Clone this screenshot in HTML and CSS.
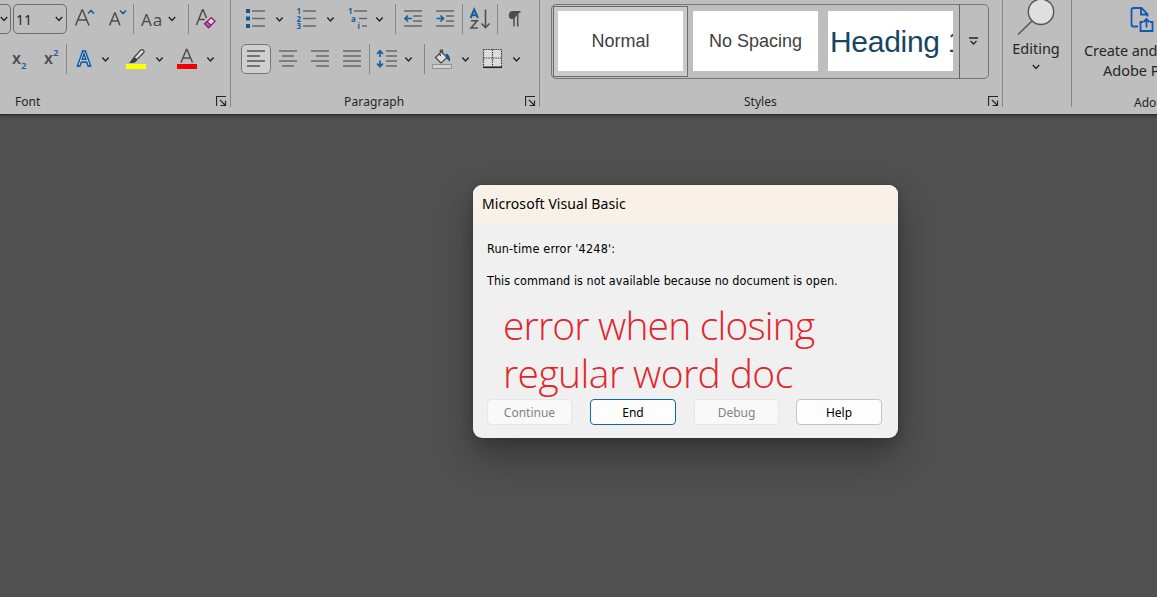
FILE: index.html
```
<!DOCTYPE html>
<html lang="en">
<head>
<meta charset="utf-8">
<title>Microsoft Visual Basic</title>
<link rel="stylesheet" href="styles.css">
</head>
<body>
<svg class="defs" width="0" height="0">
  <symbol id="chev" viewBox="0 0 8 6"><path d="M.8 1l3.2 3.4L7.200 1" fill="none" stroke="#262626" stroke-width="1.500"/></symbol>
  <symbol id="launch" viewBox="0 0 11 11"><path d="M.5 10V.5H10M4 4l5 5M9.500 4.500v5h-5" fill="none" stroke="#262626" stroke-width="1.200"/></symbol>
</svg>
<div class="ribbon">
  <section class="group font">
    <div class="row">
      <div class="combo stub"><svg width="8" height="6"><use href="#chev"/></svg></div>
      <div class="combo size"><span>11</span><svg width="8" height="6"><use href="#chev"/></svg></div>
      <svg width="35" height="30" viewBox="67 4 35 30"><path d="M75.500 25.500L82 10h.6L89 25.500M78 20h8.800" class="ln"/><path d="M88 13.500l3-3 3 3" class="bl"/></svg>
      <svg width="31" height="30" viewBox="102 4 31 30"><path d="M109.500 25.500l5.200-12.500h.5L120 25.500M111.500 21h6.800" class="ln"/><path d="M120 10.500l3 3 3-3" class="bl"/></svg>
      <i class="sep"></i>
      <span class="aa">Aa</span>
      <svg class="cv" width="8" height="6"><use href="#chev"/></svg>
      <i class="sep sep-b"></i>
      <svg width="34" height="30" viewBox="189 4 34 30"><path d="M196.500 25L202.500 9.800h.6L206.500 18M198.800 19.500h6" class="ln"/><path d="M204.800 23.800l6.500-6.200 3.800 3.700-6.500 6.300z" fill="#e6d3e3" stroke="#8a1d6c" stroke-width="1.300"/><path d="M204.800 23.800l2.400-2.300 3.800 3.700-2.400 2.400z" fill="#c85aa8" stroke="#8a1d6c" stroke-width="1.200"/></svg>
    </div>
    <div class="row">
      <svg width="66" height="30" viewBox="0 44 66 30"><text x="12" y="64" class="xx">x</text><text x="21" y="68.500" class="sub">2</text><text x="44" y="64" class="xx">x</text><text x="53" y="55.500" class="sub">2</text></svg>
      <i class="sep"></i>
      <svg width="163" height="30" viewBox="67 44 163 30">
        <path d="M77.500 66l5.300-15h2.500l5.300 15h-2.400l-1.300-4h-5.700l-1.300 4zM82 59.500h4.200L84 53.500z" fill="none" stroke="#86bce4" stroke-width="3.200" stroke-linejoin="round"/><path d="M77.500 66l5.300-15h2.500l5.300 15h-2.400l-1.300-4h-5.700l-1.300 4zM82 59.500h4.200L84 53.500z" fill="#e4eef6" stroke="#164e87" stroke-width="1.300"/>
        <path d="M134 57.500l6.500-7.200q2-1.500 3.200 0 1 1.400-.3 2.700l-6.700 6.700z" fill="#ddd" stroke="#444" stroke-width="1.200"/><path d="M128.500 63q2.200-.8 3-3.200 1.200-2.500 3.500-2 2.800 1.200 1.800 3-1.800 2.800-8.300 2.200z" fill="#3d3d3d"/><path fill="#ff0" d="M126 64h20v5h-20z"/>
        <path d="M181 62.500l5.400-13h.6l5.500 13M183 58h7.500" class="ln"/><path fill="#f00000" d="M177 64h20v5h-20z"/>
        <use href="#chev" x="101.500" y="56.500" width="8" height="6"/><use href="#chev" x="155.500" y="56.500" width="8" height="6"/><use href="#chev" x="206.500" y="56.500" width="8" height="6"/>
      </svg>
    </div>
    <div class="foot"><span class="f-font">Font</span><svg width="11" height="11"><use href="#launch"/></svg></div>
  </section>

  <section class="group para">
    <div class="row">
      <svg width="164" height="30" viewBox="231 4 164 30">
        <path d="M246 9h4v4h-4zM246 16.500h4v4h-4zM246 24h4v4h-4z" fill="#0f5699"/><path d="M252 11h13M252 18.500h13M252 26h13M303 11h13M303 18.500h13M303 26h13M354 11h13M359 18.500h8M362 26h5" class="gr"/>
        <g class="num"><text x="296.500" y="14">1</text><text x="296.500" y="21.500">2</text><text x="296.500" y="29">3</text><text x="348" y="14">1</text><text x="351" y="21.500">a</text><text x="357.500" y="29">i</text></g>
        <use href="#chev" x="275.500" y="16.500" width="8" height="6"/><use href="#chev" x="326.500" y="16.500" width="8" height="6"/><use href="#chev" x="375.500" y="16.500" width="8" height="6"/>
      </svg>
      <i class="sep"></i>
      <svg width="66" height="30" viewBox="396 4 66 30"><path d="M404 11h18M413 16h9M413 21h9M404 26h18M436 11h18M446 16h8M446 21h8M436 26h18" class="gr"/><path d="M412 18.500h-7M408 15.500l-3 3 3 3M436.500 18.500h7M440.500 15.500l3 3-3 3" class="bl"/></svg>
      <i class="sep"></i>
      <svg width="34" height="30" viewBox="463 4 34 30"><path d="M470.500 18l3.700-8.500 3.700 8.500M471.800 15.300h4.800" class="bl az"/><path d="M471 20.800h6.200l-6.200 7.200h6.800" class="ln"/><path d="M485.500 9.500v18M481.500 23.500l4 4.200 4-4.200" class="ln"/></svg>
      <i class="sep"></i>
      <svg width="40" height="30" viewBox="499 4 40 30"><path d="M521.500 11.300h-8.200a3.500 3.900 0 0 0 0 7.800h1.500z" fill="#4d4d4d"/><path d="M515 11.500V26.500M518.700 11.500V26.500M512.500 11.700h9" class="ln"/></svg>
    </div>
    <div class="row">
      <div class="left-on"><svg width="28" height="28" viewBox="242 45 28 28"><path d="M247 51h18M247 56h13M247 61h18M247 66h13" class="gr dk"/></svg></div>
      <svg width="98" height="30" viewBox="271 44 98 30"><path d="M279 51h18M282 56h12M279 61h18M282 66h12M311 51h18M316 56h13M311 61h18M316 66h13M343 51h18M343 56h18M343 61h18M343 66h18" class="gr"/></svg>
      <i class="sep"></i>
      <svg width="54" height="30" viewBox="370 44 54 30"><path d="M386 51h11M386 56h11M386 61h11M386 66h11" class="gr"/><path d="M380 57v-6M377 54l3-3.200 3 3.200M380 60.500v6M377 63.500l3 3.200 3-3.200" class="bl"/><use href="#chev" x="404.500" y="56.500" width="8" height="6"/></svg>
      <i class="sep"></i>
      <svg width="113" height="30" viewBox="425 44 113 30">
        <path d="M435.500 57.500l6-6 5.500 6.200-6 5.300zM440.300 56v-6h2.200v4" fill="#ddd" stroke="#444" stroke-width="1.200"/><path d="M446 54q3.200 0 3.700 7-2.500-1.500-2.700-4z" fill="#17568f" stroke="#17568f"/><path d="M432.500 64.500h19v4h-19z" fill="#d2d2d2" stroke="#909090"/>
        <path fill="#dcdcdc" d="M484 50h17v16h-17z"/><path d="M483.500 49.500h18v17M483.500 49.500v17M492.500 49.500v17M483.500 58h18" fill="none" stroke="#333" stroke-width="1.200" stroke-dasharray="1.300 1.100"/><path d="M483 67.300h19" stroke="#222" stroke-width="1.500"/>
        <use href="#chev" x="461.500" y="56.500" width="8" height="6"/><use href="#chev" x="512.500" y="56.500" width="8" height="6"/>
      </svg>
    </div>
    <div class="foot"><span class="f-para">Paragraph</span><svg width="11" height="11"><use href="#launch"/></svg></div>
  </section>

  <section class="group styles">
    <div class="gallery">
      <div class="style on"><div class="card">Normal</div></div>
      <div class="style"><div class="card">No Spacing</div></div>
      <div class="style"><div class="card head">Heading 1</div></div>
      <div class="more"><svg width="11" height="9" viewBox="0 0 11 9"><path d="M1 1h9M2.500 4l3 3 3-3" fill="none" stroke="#262626" stroke-width="1.300"/></svg></div>
    </div>
    <div class="foot"><span class="f-styles">Styles</span><svg width="11" height="11"><use href="#launch"/></svg></div>
  </section>

  <section class="group editing">
    <svg width="40" height="38" viewBox="1016 0 40 38"><path d="M1032 21l-14 13.500" stroke="#555" stroke-width="1.500"/><circle cx="1041" cy="11.800" r="12.700" fill="#dfdfdf" stroke="#555" stroke-width="1.400"/></svg>
    <span class="edit-label">Editing</span>
    <svg width="8" height="6"><use href="#chev"/></svg>
  </section>

  <section class="group adobe">
    <svg width="26" height="30" viewBox="1130 4 26 30"><path d="M1138 26.500h-4.500q-2 0-2-2v-14.500q0-2 2-2h8l6 6v2.500M1141 8v6.500h6.500M1143 22h-2.500v9h12v-9h-2.500M1146.500 27.500v-8M1143.500 22l3-3 3 3" fill="none" stroke="#1259b3" stroke-width="1.800"/></svg>
    <span class="ad1">Create and</span>
    <span class="ad2">Adobe PDF</span>
    <span class="ad3">Adobe Acrobat</span>
  </section>
</div>

<main class="workspace">
  <div class="dialog">
    <header>Microsoft Visual Basic</header>
    <div class="body">
      <p class="m1">Run-time error '4248':</p>
      <p class="m2">This command is not available because no document is open.</p>
      <div class="note"><div class="n1">error when closing</div><div class="n2">regular word doc</div></div>
      <div class="buttons">
        <button disabled>Continue</button><button class="default">End</button><button disabled>Debug</button><button class="help">Help</button>
      </div>
    </div>
  </div>
</main>
</body>
</html>
```

FILE: styles.css
```
* { box-sizing: border-box; }
body { margin: 0; width: 1157px; height: 597px; overflow: hidden; background: #505050; font-family: "Noto Sans", sans-serif; display: flex; flex-direction: column; }
.defs { display: none; }
svg { flex: none; display: block; }
.ribbon { height: 115px; flex: none; display: flex; background: #bebebe; border-bottom: 1px solid #2b2b2b; box-shadow: 0 1px 3px #333; color: #262626; overflow: hidden; }
.group { flex: none; height: 107px; position: relative; display: flex; flex-direction: column; border-right: 1px solid #858585; white-space: nowrap; }
.font { width: 231px; padding-top: 4px; gap: 10px; }
.para { width: 309px; padding-top: 4px; gap: 10px; }
.styles { width: 463px; padding-top: 4px; }
.editing { width: 69px; align-items: center; padding-right: 2px; }
.adobe { width: 86px; border: 0; height: 114px; overflow: hidden; }
.row { display: flex; height: 30px; align-items: center; }
.sep { width: 1px; height: 30px; background: #858585; flex: none; }
.combo { height: 30px; border: 1px solid #6c6c6c; border-radius: 5px; display: flex; align-items: center; flex: none; }
.stub { width: 11px; border-left: 0; border-radius: 0 5px 5px 0; margin-right: 2px; }
.size { width: 54px; justify-content: space-between; padding: 0 3px 0 2px; font-size: 14px; }
.aa { width: 28px; padding-left: 7px; font-size: 17px; letter-spacing: .8px; color: #4d4d4d; }
.cv { margin-left: 6px; }
.sep-b { margin-left: 12px; }
.ln { fill: none; stroke: #4d4d4d; stroke-width: 1.5; }
.bl { fill: none; stroke: #17609f; stroke-width: 1.7; }
.az { stroke-width: 2; }
.gr { fill: none; stroke: #686868; stroke-width: 1.6; }
.dk { stroke: #555; }
.xx { font: 600 16px "Noto Sans", sans-serif; fill: #4d4d4d; }
.sub { font: 600 9.5px "Noto Sans", sans-serif; fill: #17609f; }
.num { font: 700 8px "Noto Sans", sans-serif; fill: #17609f; }
.foot { display: flex; flex: none; align-items: center; justify-content: space-between; height: 18px; margin-top: 13px; padding-right: 3px; font-size: 12px; }
.font .foot, .para .foot { margin-top: 9px; height: 16px; }
.foot svg { margin-top: 1px; }
.f-font { padding-left: 15px; }
.f-para { padding-left: 113px; letter-spacing: .15px; }
.f-styles { padding-left: 204px; }
.left-on { width: 30px; height: 30px; margin-left: 10px; border: 1px solid #777; border-radius: 5px; background: #cfcfcf; flex: none; }
.gallery { flex: none; margin-left: 11px; width: 438px; height: 75px; border: 1px solid #777; border-radius: 5px; display: flex; padding: 1px 0 0 1px; }
.style { width: 135px; height: 71px; padding: 5px; flex: none; }
.style.on { border: 1px solid #6c6c6c; background: #cacaca; padding: 4px; }
.styles .foot { height: 16px; margin-top: 14px; }
.card { width: 125px; height: 60px; background: #fff; font: 18px/60px "Liberation Sans", Arial, sans-serif; color: #404040; text-align: center; overflow: hidden; }
.head { font-size: 30px; line-height: 62px; color: #17475f; text-align: left; padding-left: 2px; letter-spacing: -.3px; }
.more { margin: -2px 0 -1px 1px; border-left: 1px solid #666; flex: 1; display: flex; align-items: center; justify-content: center; padding-right: 2px; }
.edit-label { font-size: 14.5px; line-height: 20px; margin: 0 0 6px; }
.adobe svg { margin: 4px 0 0 58px; }
.adobe span { display: block; line-height: 20px; font-size: 14.5px; flex: none; }
.ad1 { margin: 6px 0 0 12px; letter-spacing: -.1px; }
.ad2 { margin-left: 31px; }
.adobe .ad3 { font-size: 12px; margin: 13px 0 0 62px; }
.workspace { flex: 1; padding: 70px 0 0 473px; }
.dialog { width: 425px; height: 253px; border-radius: 9px; background: #f0f0f0; overflow: hidden; box-shadow: 0 0 1px #222, 0 18px 36px rgba(0,0,0,.32), 0 2px 12px rgba(0,0,0,.15); color: #000; white-space: nowrap; }
header { height: 37px; padding-left: 9px; font-size: 14px; line-height: 38px; letter-spacing: .07px; background: #f9f1e7; }
.body { padding: 18px 14px 0; display: flex; flex-direction: column; }
p { margin: 0; font: 12.5px/18px "DejaVu Sans Condensed", "DejaVu Sans", sans-serif; letter-spacing: .05px; }
.m1 { letter-spacing: .2px; }
.m2 { margin-top: 14px; }
.note { margin: 11px 0 0 16px; font: 300 39px/48px "Open Sans", sans-serif; color: #e0262d; height: 98px; }
.n1 { letter-spacing: -.82px; }
.n2 { letter-spacing: -.58px; }
.buttons { display: grid; grid-template-columns: 85px 86px 85px 86px; column-gap: 18px; align-items: center; }
button { height: 26px; padding: 0; border: 1px solid #c4c4c4; border-radius: 4px; background: #fdfdfd; font: 12px "Noto Sans", sans-serif; color: #000; }
button:disabled { color: #838383; border-color: #e6e6e6; background: #f9f9f9; }
.default { border-color: #0f67ab; }
.help { margin: 0 1px 0 -1px; width: 86px; }
```
